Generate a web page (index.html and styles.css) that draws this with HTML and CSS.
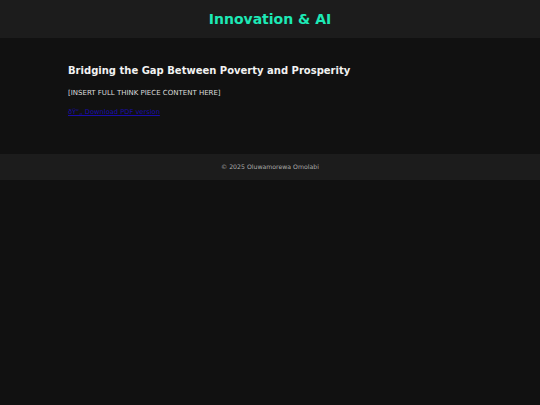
FILE: index.html
```html
<html>
	<head>
		<title>Innovation &amp; AI</title>
		<meta charset="utf-8">
		<link rel="stylesheet" href="styles.css">
	</head>

	<body>
		<div class="topbar">
			<h1>Innovation &amp; AI</h1>
		</div>

		<div class="main">
			<h2>Bridging the Gap Between Poverty and Prosperity</h2>
			<p>[INSERT FULL THINK PIECE CONTENT HERE]</p>
			<p class="download"><a href="#">ðŸ“„ Download PDF version</a></p>
		</div>

		<div class="footer">
			&copy; 2025 Oluwamorewa Omolabi
		</div>
	</body>
</html>
```

FILE: styles.css
```css
body {
	margin: 0;
	background: #111111;
	color: #dddddd;
	font-family: "DejaVu Sans", Verdana, sans-serif;
}
.topbar {
	background: #1c1c1c;
	height: 38px;
	display: flex;
	align-items: center;
	justify-content: center;
}
.topbar h1 {
	margin: 0;
	font-size: 14px;
	color: #1de9b6;
}
.main {
	width: 404px;
	margin: 0 auto;
	padding: 27px 0 0;
	height: 89px;
}
.main h2 {
	margin: 0 0 12px;
	font-size: 10px;
	line-height: 12px;
	color: #f2f2f2;
}
.main p {
	margin: 0 0 11px;
	font-size: 7px;
	line-height: 8px;
}
.main p.download {
	font-size: 6.7px;
}
.main a {
	color: #1a0dab;
}
.footer {
	background: #1c1c1c;
	color: #aaaaaa;
	font-size: 6.2px;
	line-height: 8px;
	text-align: center;
	padding: 9px 0;
}
```
